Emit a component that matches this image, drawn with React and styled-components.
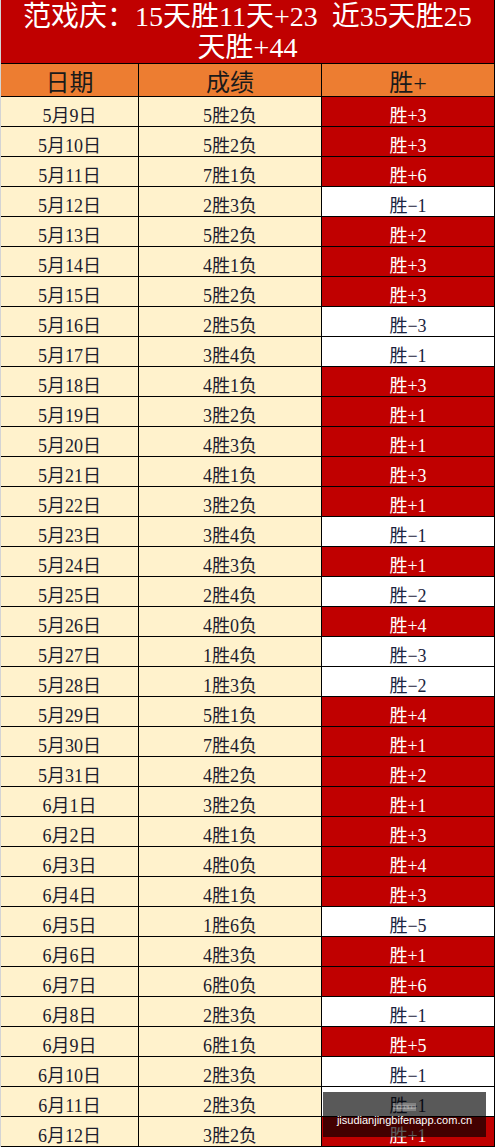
import styled, { createGlobalStyle } from 'styled-components';

const GlobalStyle = createGlobalStyle`
  html, body {
    margin: 0;
    padding: 0;
    background: #ffffff;
  }
  body {
    width: 496px;
    font-family: "Liberation Serif", "Noto Sans CJK SC", serif;
  }
`;

const rows = [
  ['5月9日', '5胜2负', 3],
  ['5月10日', '5胜2负', 3],
  ['5月11日', '7胜1负', 6],
  ['5月12日', '2胜3负', -1],
  ['5月13日', '5胜2负', 2],
  ['5月14日', '4胜1负', 3],
  ['5月15日', '5胜2负', 3],
  ['5月16日', '2胜5负', -3],
  ['5月17日', '3胜4负', -1],
  ['5月18日', '4胜1负', 3],
  ['5月19日', '3胜2负', 1],
  ['5月20日', '4胜3负', 1],
  ['5月21日', '4胜1负', 3],
  ['5月22日', '3胜2负', 1],
  ['5月23日', '3胜4负', -1],
  ['5月24日', '4胜3负', 1],
  ['5月25日', '2胜4负', -2],
  ['5月26日', '4胜0负', 4],
  ['5月27日', '1胜4负', -3],
  ['5月28日', '1胜3负', -2],
  ['5月29日', '5胜1负', 4],
  ['5月30日', '7胜4负', 1],
  ['5月31日', '4胜2负', 2],
  ['6月1日', '3胜2负', 1],
  ['6月2日', '4胜1负', 3],
  ['6月3日', '4胜0负', 4],
  ['6月4日', '4胜1负', 3],
  ['6月5日', '1胜6负', -5],
  ['6月6日', '4胜3负', 1],
  ['6月7日', '6胜0负', 6],
  ['6月8日', '2胜3负', -1],
  ['6月9日', '6胜1负', 5],
  ['6月10日', '2胜3负', -1],
  ['6月11日', '2胜3负', -1],
  ['6月12日', '3胜2负', 1],
];

export default function App() {
  return (
    <>
      <GlobalStyle />
      <Sheet>
        <Title>
          范戏庆：15天胜11天+23&nbsp;&nbsp;近35天胜25
          <br />
          天胜+44
        </Title>
        <HeadCell>日期</HeadCell>
        <HeadCell>成绩</HeadCell>
        <HeadCell>胜+</HeadCell>
        {rows.map(([date, score, diff]) => (
          <Row key={date}>
            <Cell>{date}</Cell>
            <Cell>{score}</Cell>
            <ResultCell $win={diff > 0}>
              胜{diff > 0 ? '+' : '−'}
              {Math.abs(diff)}
            </ResultCell>
          </Row>
        ))}
        <Watermark>
          <WatermarkTag>□□□□□□</WatermarkTag>
          <WatermarkUrl>jisudianjingbifenapp.com.cn</WatermarkUrl>
        </Watermark>
      </Sheet>
    </>
  );
}

// Sheet

const Sheet = styled.div`
  position: relative;
  display: grid;
  grid-template-columns: 137px 182px 172px;
  grid-template-rows: 63px 32px;
  grid-auto-rows: 29px;
  gap: 1px;
  background: #000000;
  padding: 0 1px 1px 0;
  border-left: 1px solid #d4d4d4;
  box-sizing: border-box;
  width: 495px;
`;

const Row = styled.div`
  display: contents;
`;

// Title + header

const Title = styled.div`
  grid-column: 1 / -1;
  background: #c00000;
  color: #ffffff;
  font-size: 28px;
  line-height: 31px;
  padding-top: 1px;
  text-align: center;
  white-space: nowrap;
`;

const HeadCell = styled.div`
  background: #ed7d31;
  color: #1a1a1a;
  font-size: 24px;
  display: flex;
  align-items: center;
  justify-content: center;
`;

// Body cells

const Cell = styled.div`
  background: #fff2cc;
  color: #1c1c2c;
  font-size: 18px;
  line-height: 18px;
  display: flex;
  align-items: flex-end;
  justify-content: center;
  padding-bottom: 1px;
  box-sizing: border-box;
`;

const ResultCell = styled(Cell)`
  background: ${(p) => (p.$win ? '#c00000' : '#ffffff')};
  color: ${(p) => (p.$win ? '#ffffff' : '#1c2540')};
`;

// Watermark overlay

const Watermark = styled.div`
  position: absolute;
  left: 322px;
  top: 1092px;
  width: 163px;
  height: 45px;
  background: rgba(0, 0, 0, 0.65);
  display: flex;
  flex-direction: column;
  align-items: center;
  justify-content: center;
  gap: 3px;
  font-family: "Liberation Sans", Arial, sans-serif;
  color: #ffffff;
`;

const WatermarkTag = styled.div`
  font-size: 6px;
  line-height: 8px;
  color: #dddddd;
  background: rgba(255, 255, 255, 0.25);
  padding: 0 1px;
`;

const WatermarkUrl = styled.div`
  font-size: 11px;
  line-height: 12px;
`;
